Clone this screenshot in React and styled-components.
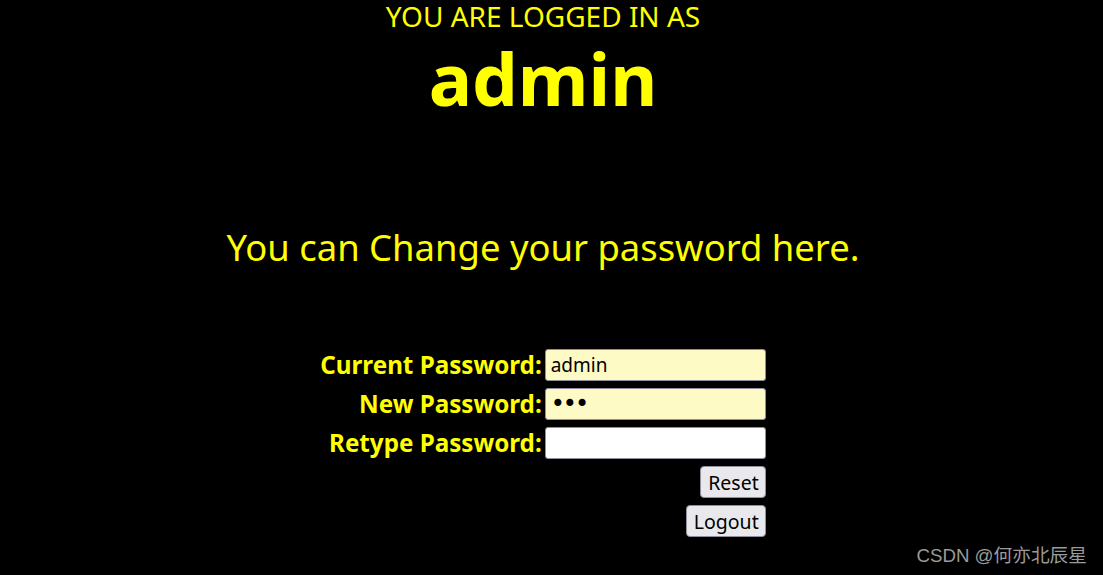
import React, { useState } from "react";
import styled, { createGlobalStyle } from "styled-components";

const GlobalStyle = createGlobalStyle`
  html, body {
    margin: 0;
    padding: 0;
    background: #000;
  }
  body {
    font-family: "Noto Sans", "Open Sans", sans-serif;
    height: 575px;
    overflow: hidden;
  }
`;

const Page = styled.div`
  position: relative;
  height: 575px;
  padding-right: 17px;
  display: flex;
  flex-direction: column;
  align-items: center;
  color: #ffff00;
`;

const LoggedAs = styled.div`
  font-size: 28px;
  line-height: 32px;
`;

const UserName = styled.div`
  font-size: 72.5px;
  font-weight: 700;
  line-height: 98px;
  margin-top: -3px;
`;

const Notice = styled.div`
  font-size: 36.4px;
  line-height: 48px;
  margin-top: 96px;
`;

const Form = styled.form`
  display: grid;
  grid-template-columns: auto 221px;
  column-gap: 3px;
  row-gap: 7px;
  align-items: center;
  margin-top: 78px;
`;

const Label = styled.label`
  justify-self: end;
  font-size: 24.2px;
  font-weight: 700;
  line-height: 32px;
`;

const Field = styled.input`
  box-sizing: border-box;
  width: 221px;
  height: 32px;
  padding: 0 5px;
  border: 1px solid #8f8f9d;
  border-radius: 3px;
  background: ${(p) => (p.$filled ? "#fefac6" : "#fff")};
  font-family: ${(p) => (p.type === "password" ? '"DejaVu Sans", sans-serif' : '"Noto Sans", sans-serif')};
  font-size: ${(p) => (p.type === "password" ? "24px" : "19px")};
  letter-spacing: ${(p) => (p.type === "password" ? "-2px" : "0")};
  color: #000;
  outline: none;
`;

const Button = styled.button`
  grid-column: 2;
  justify-self: end;
  height: 32px;
  padding: 0 6px 0 7px;
  border: 1px solid #8f8f9d;
  border-radius: 4px;
  background: #e9e9ed;
  font-family: "Noto Sans", sans-serif;
  font-size: 19.5px;
  color: #000;
`;

const Watermark = styled.div`
  position: absolute;
  right: 16px;
  bottom: 8px;
  font-family: "Liberation Sans", "Noto Sans CJK SC", sans-serif;
  font-size: 18.7px;
  color: #9a9a9a;
`;

export default function App() {
  const [current, setCurrent] = useState("admin");
  const [next, setNext] = useState("abc");
  const [retype, setRetype] = useState("");

  return (
    <>
      <GlobalStyle />
      <Page>
        <LoggedAs>YOU ARE LOGGED IN AS</LoggedAs>
        <UserName>admin</UserName>
        <Notice>You can Change your password here.</Notice>
        <Form onSubmit={(e) => e.preventDefault()}>
          <Label htmlFor="cur">Current Password:</Label>
          <Field id="cur" $filled value={current} onChange={(e) => setCurrent(e.target.value)} />
          <Label htmlFor="new">New Password:</Label>
          <Field id="new" type="password" $filled value={next} onChange={(e) => setNext(e.target.value)} />
          <Label htmlFor="re">Retype Password:</Label>
          <Field id="re" type="password" value={retype} onChange={(e) => setRetype(e.target.value)} />
          <Button type="reset">Reset</Button>
          <Button type="button">Logout</Button>
        </Form>
        <Watermark>CSDN @何亦北辰星</Watermark>
      </Page>
    </>
  );
}
